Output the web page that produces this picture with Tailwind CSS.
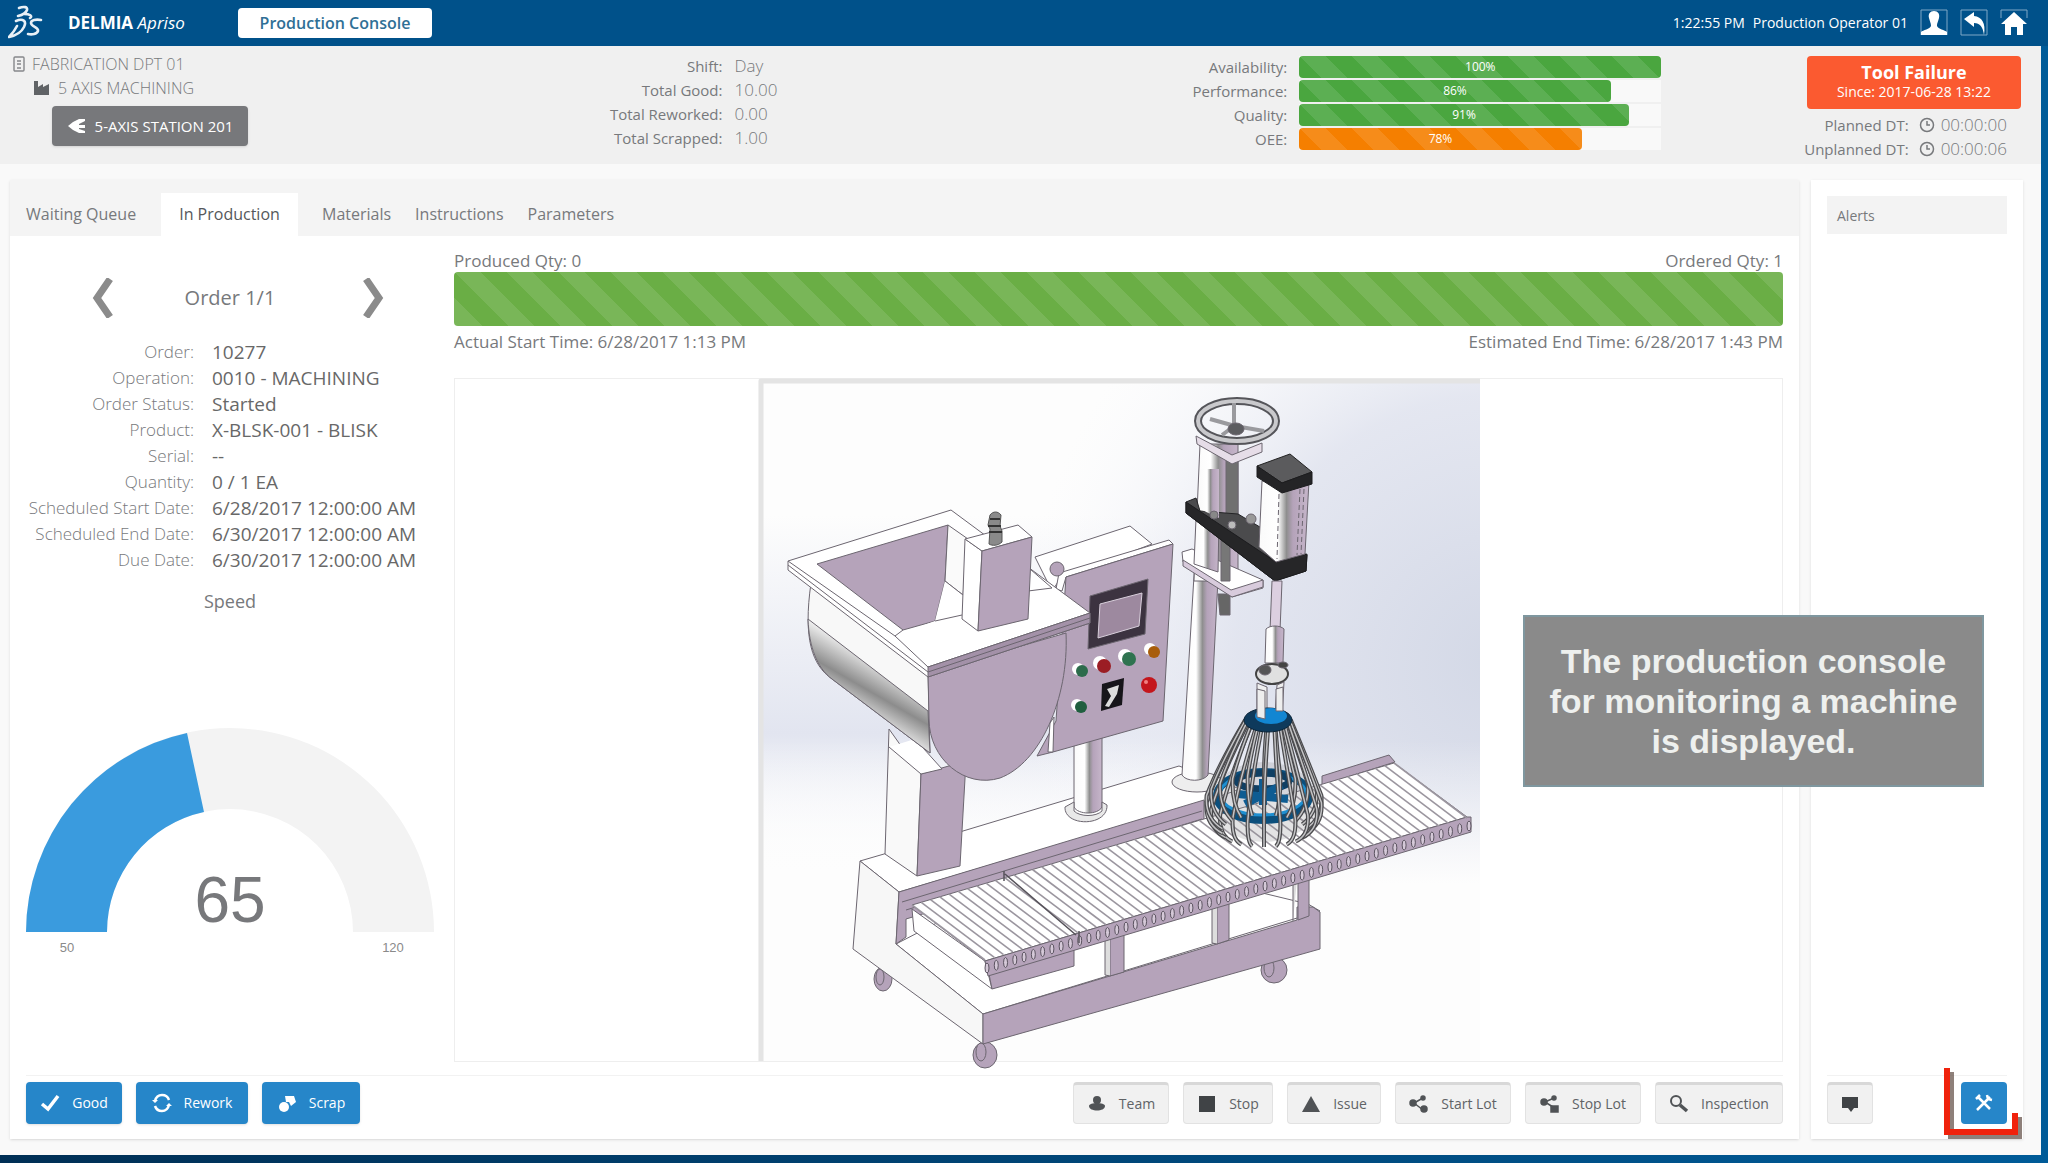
<!DOCTYPE html>
<html lang="en">
<head>
    <meta charset="UTF-8">
    <meta name="viewport" content="width=device-width, initial-scale=1.0">
    <title>DELMIA Apriso - Production Console</title>
    <script src="https://cdn.jsdelivr.net/npm/@tailwindcss/browser@4"></script>
    <style>
        body {
            font-family: 'Open Sans', 'Noto Sans', sans-serif;
        }
        /* Diagonal stripes for the progress bars */
        .striped {
            background-image: linear-gradient(45deg, rgba(255,255,255,.1) 25%, transparent 25%, transparent 50%, rgba(255,255,255,.1) 50%, rgba(255,255,255,.1) 75%, transparent 75%);
            background-size: 52px 52px;
        }
    </style>
</head>
<body class="min-h-screen flex flex-col bg-gradient-to-r from-[#002f55] to-[#005b98] text-[#77797c]">
    <div class="flex-1 flex flex-col mr-[7px] mb-2 bg-[#f9f9f9]">

        <!-- Top bar -->
        <header class="h-[46px] -mr-[7px] pl-2 pr-5 flex items-center bg-[#00518a] text-white">
            <svg class="w-9 h-9" viewBox="0 0 36 36" fill="none" stroke="#e8f0f6" stroke-width="2.6" stroke-linecap="round" stroke-linejoin="round" role="img" aria-label="3DS">
                <path d="M11 3C16 1 20 2 19 5C18 8 14 10 10 11M16 9C22 9 25 11 22 13" />
                <path d="M8 16C15 13 19 16 16 22C13 28 6 31 1 32C5 28 7 25 9 21" />
                <path d="M33 15C28 14 23 15 23 18C23 22 31 22 30 26C29 29 24 30 20 29" />
            </svg>
            <div class="ml-6 w-[170px] text-[17px] leading-6 whitespace-nowrap"><span class="font-bold">DELMIA</span> <span class="italic">Apriso</span></div>
            <button class="h-[30px] w-[194px] rounded bg-white text-[#2f7096] text-base font-semibold">Production Console</button>
            <div class="ml-auto flex items-center gap-2 text-sm leading-6">
                <span>1:22:55 PM</span>
                <span>Production Operator 01</span>
            </div>
            <div class="ml-3 flex items-center gap-3">
                <button aria-label="User">
                    <svg class="w-7 h-7" viewBox="0 0 28 28"><path d="M1 26V1H27V26" fill="none" stroke="#7fa8c6" stroke-width="1" /><path d="M14 2C18 2 20 5 19 9C18 13 17 14 17 17C18 20 25 21 27 23V26H1V23C3 21 10 20 11 17C11 14 10 13 9 9C8 5 10 2 14 2Z" fill="#fff" /></svg>
                </button>
                <button aria-label="Back">
                    <svg class="w-7 h-7" viewBox="0 0 28 28"><path d="M1 1H27V26H1Z" fill="none" stroke="#7fa8c6" stroke-width="1" /><path d="M4 10L14 3V7C22 8 26 14 24 26C23 18 20 14 14 14V18Z" fill="#fff" /></svg>
                </button>
                <button aria-label="Home">
                    <svg class="w-7 h-7" viewBox="0 0 28 28"><path d="M1 9V1H27V9" fill="none" stroke="#7fa8c6" stroke-width="1" /><path d="M14 3L27 15H23V26H17V18H11V26H5V15H1Z" fill="#fff" /></svg>
                </button>
            </div>
        </header>

        <!-- Status summary -->
        <section class="h-[118px] grid grid-cols-[28%_24%_33%_15%] bg-[#f0f0f0] text-[15px]">
            <div class="pl-3 pt-1.5 flex flex-col items-start">
                <div class="flex items-center gap-1.5 h-6 text-base font-light">
                    <svg class="w-3.5 h-4" viewBox="0 0 14 16" fill="none" stroke="#85878a" stroke-width="1.4"><rect x="2" y="1" width="10" height="14" rx="1" /><path d="M5 5H9M5 8H9M5 12H9" /></svg>
                    FABRICATION DPT 01
                </div>
                <div class="flex items-center gap-2 h-6 ml-[22px] text-base font-light">
                    <svg class="w-4 h-4" viewBox="0 0 16 16" fill="#606366"><path d="M0 1H4V7L9 4V7L15 4V15H0Z" /></svg>
                    5 AXIS MACHINING
                </div>
                <button class="mt-1.5 ml-10 h-10 w-[196px] rounded-sm bg-[#77787b] text-white text-[15px] flex items-center justify-center gap-2 shadow">
                    <svg class="w-5 h-5" viewBox="0 0 20 20" fill="#fff"><path d="M1 10L6 6L12 3L18 3V5L12 8V9H18V12H12V13L18 15V17H12L6 14Z" /></svg>
                    5-AXIS STATION 201
                </button>
            </div>
            <dl class="pt-2 grid grid-cols-[151px_1fr] auto-rows-[24px] gap-x-3 content-start leading-6 [&>dd]:text-[17px]">
                <dt class="text-right">Shift:</dt><dd class="font-light">Day</dd>
                <dt class="text-right">Total Good:</dt><dd class="font-light">10.00</dd>
                <dt class="text-right">Total Reworked:</dt><dd class="font-light">0.00</dd>
                <dt class="text-right">Total Scrapped:</dt><dd class="font-light">1.00</dd>
            </dl>
            <dl class="pt-2.5 grid grid-cols-[226px_362px] auto-rows-[24px] gap-x-3 content-start leading-[22px] [&>dd]:h-[22px] [&>dd]:bg-[#f9f9f9] [&>dd>div]:h-full [&>dd>div]:rounded-sm [&>dd>div]:text-center [&>dd>div]:text-xs [&>dd>div]:leading-[22px] [&>dd>div]:text-white">
                <dt class="text-right">Availability:</dt><dd><div class="striped bg-[#4aa63f]" style="width:100%">100%</div></dd>
                <dt class="text-right">Performance:</dt><dd><div class="striped bg-[#4aa63f]" style="width:86%">86%</div></dd>
                <dt class="text-right">Quality:</dt><dd><div class="striped bg-[#4aa63f]" style="width:91%">91%</div></dd>
                <dt class="text-right">OEE:</dt><dd><div class="striped bg-[#f57f00]" style="width:78%">78%</div></dd>
            </dl>
            <div class="pt-2.5 pr-5 flex flex-col items-end">
                <div class="w-[214px] h-[53px] rounded-sm bg-[#fb5a30] text-white text-center pt-1">
                    <div class="text-lg leading-6 font-bold">Tool Failure</div>
                    <div class="text-sm leading-4">Since: 2017-06-28 13:22</div>
                </div>
                <dl class="mt-1 mr-3.5 grid grid-cols-[auto_auto] auto-rows-[24px] gap-x-2.5 leading-6 text-right [&>dd]:text-[17px]">
                    <dt>Planned DT:</dt>
                    <dd class="flex items-center gap-1.5 font-light"><svg class="w-4 h-4" viewBox="0 0 16 16" fill="none" stroke="#77797c" stroke-width="1.5"><circle cx="8" cy="8" r="6.5" /><path d="M8 4V8H11" /></svg>00:00:00</dd>
                    <dt>Unplanned DT:</dt>
                    <dd class="flex items-center gap-1.5 font-light"><svg class="w-4 h-4" viewBox="0 0 16 16" fill="none" stroke="#77797c" stroke-width="1.5"><circle cx="8" cy="8" r="6.5" /><path d="M8 4V8H11" /></svg>00:00:06</dd>
                </dl>
            </div>
        </section>

        <main class="flex-1 flex gap-3 pt-4 pl-2.5 pr-[18px] pb-4">
            <section class="flex-1 flex flex-col bg-white shadow-sm">
                <!-- Tabs -->
                <nav class="h-[56px] flex items-end bg-[#f4f4f4] text-base [&>a]:h-[43px] [&>a]:leading-[43px]">
                    <a href="#" class="w-[151px] pl-4">Waiting Queue</a>
                    <a href="#" class="w-[137px] text-center bg-white text-[#55585b]">In Production</a>
                    <a href="#" class="ml-6">Materials</a>
                    <a href="#" class="ml-6">Instructions</a>
                    <a href="#" class="ml-6">Parameters</a>
                </nav>

                <div class="flex-1 flex px-4 gap-5">
                    <!-- Order details -->
                    <div class="w-[408px] flex flex-col">
                        <div class="mt-[42px] px-16 flex items-center justify-between">
                            <button aria-label="Previous order"><svg class="w-6 h-10" viewBox="0 0 24 40" fill="none" stroke="#8b8b8b" stroke-width="7"><path d="M20 1L7 20L20 39" /></svg></button>
                            <h2 class="pr-4 text-xl leading-6">Order 1/1</h2>
                            <button class="-mr-4" aria-label="Next order"><svg class="w-6 h-10" viewBox="0 0 24 40" fill="none" stroke="#8b8b8b" stroke-width="7"><path d="M4 1L17 20L4 39" /></svg></button>
                        </div>
                        <dl class="mt-[21px] grid grid-cols-[168px_1fr] auto-rows-[26px] gap-x-[18px] leading-[26px] whitespace-nowrap [&>dt]:text-right [&>dt]:text-[17px] [&>dt]:font-light [&>dd]:text-[19px] [&>dd]:text-[#686868]">
                            <dt>Order:</dt><dd>10277</dd>
                            <dt>Operation:</dt><dd>0010 - MACHINING</dd>
                            <dt>Order Status:</dt><dd>Started</dd>
                            <dt>Product:</dt><dd>X-BLSK-001 - BLISK</dd>
                            <dt>Serial:</dt><dd>--</dd>
                            <dt>Quantity:</dt><dd>0 / 1 EA</dd>
                            <dt>Scheduled Start Date:</dt><dd>6/28/2017 12:00:00 AM</dd>
                            <dt>Scheduled End Date:</dt><dd>6/30/2017 12:00:00 AM</dd>
                            <dt>Due Date:</dt><dd>6/30/2017 12:00:00 AM</dd>
                        </dl>
                        <h3 class="mt-4 text-center text-lg leading-6">Speed</h3>
                        <!-- Gauge -->
                        <svg class="mt-[115px] w-full" viewBox="0 0 408 232" font-family="Liberation Sans, Arial, sans-serif" text-anchor="middle">
                            <path d="M0 204A204 204 0 0 1 408 204H327A123 123 0 0 0 81 204Z" fill="#f3f3f3" />
                            <path d="M0 204A204 204 0 0 1 161 5L178 84A123 123 0 0 0 81 204Z" fill="#3a9bde" />
                            <text x="204" y="194" font-size="64" fill="#77787b">65</text>
                            <text x="41" y="224" font-size="13" fill="#8a8a8a">50</text>
                            <text x="367" y="224" font-size="13" fill="#8a8a8a">120</text>
                        </svg>
                    </div>

                    <!-- Progress and machine picture -->
                    <div class="flex-1 flex flex-col pb-3">
                        <div class="mt-3.5 flex justify-between text-[17px] leading-[22px]">
                            <span>Produced Qty: 0</span><span>Ordered Qty: 1</span>
                        </div>
                        <div class="striped h-[54px] rounded bg-[#6aae45]" role="progressbar" aria-label="Order progress"></div>
                        <div class="mt-1 flex justify-between text-[17px] leading-6">
                            <span>Actual Start Time: 6/28/2017 1:13 PM</span><span>Estimated End Time: 6/28/2017 1:43 PM</span>
                        </div>
                        <div class="mt-6 flex justify-center border border-[#eeeeee]">
                            <svg id="machine" class="w-[722px] overflow-visible" viewBox="758 380 722 682" stroke="#6c6670" stroke-width="1" stroke-linejoin="round" role="img" aria-label="Filling machine with roller conveyor">
                                <defs>
                                    <radialGradient id="sky" gradientUnits="userSpaceOnUse" cx="1500" cy="660" r="480">
                                        <stop offset="0" stop-color="#d3d8e6" />
                                        <stop offset=".55" stop-color="#e1e4ef" stop-opacity=".9" />
                                        <stop offset="1" stop-color="#f6f7fb" stop-opacity="0" />
                                    </radialGradient>
                                    <linearGradient id="haze" x1="0" y1="0" x2="0" y2="1">
                                        <stop offset=".2" stop-color="#e2e5f0" stop-opacity="0" />
                                        <stop offset=".52" stop-color="#e2e5f0" />
                                        <stop offset=".72" stop-color="#f4f5f9" stop-opacity="0" />
                                    </linearGradient>
                                    <linearGradient id="fade" x1="0" y1="0" x2="0" y2="1">
                                        <stop offset=".53" stop-color="#fdfdfd" stop-opacity="0" />
                                        <stop offset=".74" stop-color="#fdfdfd" />
                                    </linearGradient>
                                    <linearGradient id="tube" x1="0" x2="1">
                                        <stop offset="0" stop-color="#fafafa" />
                                        <stop offset=".38" stop-color="#ffffff" />
                                        <stop offset=".55" stop-color="#8e8e8e" />
                                        <stop offset=".68" stop-color="#b5a3ba" />
                                        <stop offset="1" stop-color="#c6b6ca" />
                                    </linearGradient>
                                    <linearGradient id="belly" gradientUnits="userSpaceOnUse" x1="880" y1="660" x2="850" y2="712">
                                        <stop offset="0" stop-color="#f6f6f6" />
                                        <stop offset=".55" stop-color="#8c8c8c" />
                                        <stop offset="1" stop-color="#ededed" />
                                    </linearGradient>
                                </defs>
                                <rect x="758" y="380" width="722" height="682" fill="#fdfdfd" stroke="none" />
                                <rect x="758" y="380" width="722" height="682" fill="url(#haze)" stroke="none" />
                                <rect x="758" y="380" width="722" height="682" fill="url(#sky)" stroke="none" />
                                <rect x="758" y="380" width="722" height="682" fill="url(#fade)" stroke="none" />
                                <path d="M761 1062V382H1480" fill="none" stroke="#e4e4e4" stroke-width="5" />

                                <!-- base frame -->
                                <g fill="#b5a3ba">
                                    <ellipse cx="883" cy="980" rx="9" ry="12" /><ellipse cx="880" cy="978" rx="4" ry="8" />
                                    <ellipse cx="985" cy="1056" rx="12" ry="13" /><ellipse cx="981" cy="1053" rx="5" ry="9" />
                                    <ellipse cx="1274" cy="971" rx="13" ry="13" /><ellipse cx="1269" cy="969" rx="5" ry="9" />
                                </g>
                                <path d="M860 862L963 832L1179 767L1240 790L1204 803L899 893Z" fill="#fff" />
                                <path d="M896 945L983 1015L1320 912L1308 905L1080 850Z" fill="#fff" />
                                <path d="M860 862L899 893L896 945L983 1015V1045L853 950Z" fill="#f7f7f7" />
                                <path d="M983 1015L1297 921V908H1313L1320 913V950L983 1045Z" fill="#b5a3ba" />
                                <path d="M899 893L1204 801L1204 830L906 920V938L896 945Z" fill="#b5a3ba" />
                                <path d="M902 903L1202 812M906 911L1202 820" fill="none" />
                                <path d="M1110 930H1124V973L1110 977ZM1217 900H1229V941L1217 945ZM1298 870H1309V917L1298 921Z" fill="#b5a3ba" />
                                <path d="M1110 930H1105V976L1110 977M1217 900H1212V944L1217 945M1298 870H1293V922" fill="#ddd" />

                                <!-- roller conveyor -->
                                <path d="M912 910L985 962L992 990L914 932Z" fill="#fff" />
                                <path d="M988 970L1074 945V967L992 990Z" fill="#b5a3ba" />
                                <path d="M1322 777L1389 756L1395 763L1322 786Z" fill="#b5a3ba" />
                                <path d="M912 906L1394 764L1467 818L985 962Z" fill="#fff" />
                                <path d="M985 962L1467 818H1471V833L988 977Z" fill="#b5a3ba" />
                                <g id="rollers" stroke="#9b969f"></g>
                                <path d="M1005 875L1076 936M1004 872V882M1079 932V944" fill="none" stroke="#56525a" stroke-width="1.5" />

                                <!-- left leg -->
                                <path d="M889 730L921 775L917 877L885 855Z" fill="#f9f9f9" />
                                <path d="M921 775L966 762L960 867L917 877Z" fill="#b5a3ba" />
                                <path d="M889 748L921 775L942 770L915 740" fill="#fff" />

                                <!-- control cabinet -->
                                <path d="M1074 725H1102V808C1098 816 1078 816 1074 808Z" fill="url(#tube)" />
                                <path d="M1065 808C1064 828 1108 828 1107 806L1102 803V812C1096 818 1080 818 1074 812V803Z" fill="#e9e9e9" />
                                <path d="M1035 558L1130 527L1152 545L1060 580L1052 592Z" fill="#fff" />
                                <path d="M1059 574L1169 541L1173 545L1066 578L1062 592L1056 590Z" fill="#fff" />
                                <path d="M1066 578L1173 545L1163 722L1053 753L1037 757L1056 722Z" fill="#b5a3ba" />
                                <path d="M1050 724L1054 718L1053 753L1048 753Z" fill="#fff" />
                                <circle cx="1057" cy="570" r="7" fill="#b5a3ba" />
                                <path d="M1090 597L1148 580L1145 635L1088 650Z" fill="#3c3340" />
                                <path d="M1100 605L1142 594L1139 627L1098 639Z" fill="#9d899f" stroke="#d9d0dc" />
                                <g stroke="none">
                                    <circle cx="1078" cy="670" r="6" fill="#fff" /><circle cx="1082" cy="672" r="6" fill="#2c6b4b" />
                                    <circle cx="1100" cy="664" r="7" fill="#fff" /><circle cx="1104" cy="667" r="7" fill="#9b1d24" />
                                    <circle cx="1125" cy="657" r="7" fill="#fff" /><circle cx="1129" cy="660" r="7" fill="#2f7350" />
                                    <circle cx="1150" cy="650" r="6" fill="#fff" /><circle cx="1154" cy="653" r="6" fill="#a85d0c" />
                                    <circle cx="1077" cy="706" r="6" fill="#fff" /><circle cx="1081" cy="708" r="6" fill="#205f3f" />
                                    <circle cx="1149" cy="686" r="8" fill="#c4161c" /><circle cx="1146" cy="683" r="2" fill="#f08080" />
                                    <path d="M1102 685L1124 679L1122 706L1101 712Z" fill="#17151a" />
                                    <path d="M1107 690L1119 686L1117 695L1109 708L1105 707L1111 697Z" fill="#dcdcdc" />
                                </g>

                                <!-- tank -->
                                <path d="M811 584L928 672L930 754L832 680C812 666 803 640 811 584Z" fill="#f8f8f8" />
                                <path d="M808 620L928 712L930 754L832 680C817 669 809 648 808 620Z" fill="url(#belly)" />
                                <path d="M928 674L1066 634C1069 700 1040 764 1000 779C965 790 929 760 929 720Z" fill="#b5a3ba" />
                                <path d="M788 562L951 511L1090 614V624L928 678L788 571Z" fill="#fff" />
                                <path d="M817 565L948 526L945 582L935 622L903 631Z" fill="#b5a3ba" />
                                <path d="M948 526L968 540L963 596L945 582Z" fill="#fafafa" />
                                <path d="M945 582L963 596L975 612L895 637L935 622Z" fill="#fff" stroke="none" />
                                <path d="M945 582L963 596M935 622L962 616M895 637L903 631M1028 592L1052 589M1030 570L1052 589" fill="none" />
                                <path d="M895 637L928 668L1090 614M788 562L895 637M788 566L928 673" fill="none" />
                                <path d="M928 668L1090 614V624L928 678Z" fill="#a391a8" />
                                <path d="M928 673L1090 619" fill="none" />
                                <path d="M965 540L982 552L978 632L962 620Z" fill="#fff" />
                                <path d="M965 540L1018 526L1032 538L982 552Z" fill="#fff" />
                                <path d="M982 552L1032 538L1028 620L978 632Z" fill="#b5a3ba" />
                                <path d="M989 545L990 530L988 526L990 516C993 512 998 512 1001 516L1000 527L1002 532V543C998 547 992 547 989 545Z" fill="#8a8a8a" stroke="#555" />
                                <path d="M988 527H1001M989 533H1002M990 520H1000" stroke="#333" stroke-width="2" />

                                <!-- mixer stand -->
                                <ellipse cx="1197" cy="783" rx="25" ry="10" fill="#eee" />
                                <path d="M1195 560H1219L1208 776C1203 783 1186 783 1182 776Z" fill="url(#tube)" />
                                <path d="M1200 445H1238V582H1194Z" fill="url(#tube)" />
                                <path d="M1226 460H1238V520H1226Z" fill="#707070" />
                                <path d="M1218 595H1230V616H1220Z" fill="#666" />
                                <path d="M1182 553L1192 550L1263 581V589L1232 598L1183 563Z" fill="#fff" />
                                <path d="M1183 561L1231 591L1263 581V588L1232 598L1183 567Z" fill="#d8cbdc" />
                                <path d="M1196 520H1219L1218 573L1194 565Z" fill="url(#tube)" />
                                <path d="M1221 540H1230V582H1221Z" fill="#777" />
                                <path d="M1196 437L1232 456L1262 444V453L1232 465L1197 445Z" fill="#e6dde8" />
                                <ellipse cx="1237" cy="422" rx="39" ry="20" fill="none" stroke="#55555a" stroke-width="8" />
                                <ellipse cx="1237" cy="422" rx="39" ry="20" fill="none" stroke="#c9c9cc" stroke-width="4" />
                                <path d="M1234 404V425M1210 420L1235 427L1264 432M1237 425L1222 436" fill="none" stroke="#9a9a9e" stroke-width="4" />
                                <ellipse cx="1236" cy="430" rx="8" ry="6" fill="#5c5c60" />
                                <path d="M1186 503L1196 499L1200 512L1238 515L1307 556L1306 572L1275 582L1186 514Z" fill="#4b4b4d" stroke="#242426" />
                                <path d="M1186 503L1276 563L1307 555L1306 572L1275 582L1186 514Z" fill="#262628" stroke="#1c1c1e" />
                                <path d="M1200 470H1219V519L1200 510Z" fill="url(#tube)" stroke="none" />
                                <circle cx="1214" cy="516" r="4" fill="#888" /><circle cx="1232" cy="526" r="4" fill="#bbb" /><circle cx="1251" cy="520" r="5" fill="#999" />
                                <path d="M1262 482L1309 482L1305 555L1276 563L1259 548Z" fill="url(#tube)" />
                                <path d="M1300 490L1297 556M1304 490L1301 555M1279 495L1277 560" stroke-dasharray="5 3" />
                                <path d="M1257 467L1290 455L1312 473L1282 484Z" fill="#5b5b5d" stroke="#222" />
                                <path d="M1257 467L1282 484L1312 473V485L1282 494L1257 478Z" fill="#242426" stroke="#1c1c1e" />

                                <!-- spindle -->
                                <path d="M1272 582H1282L1280 632H1270Z" fill="#dccfe0" />
                                <path d="M1266 630C1270 626 1280 626 1284 630L1283 664H1265Z" fill="url(#tube)" />
                                <ellipse cx="1272" cy="675" rx="16" ry="10" fill="#e0e0e0" stroke="#444" stroke-width="2" />
                                <ellipse cx="1265" cy="671" rx="6" ry="5" fill="#555" /><ellipse cx="1283" cy="666" rx="5" ry="3" fill="#444" />
                                <path d="M1257 722V684L1267 688V722ZM1275 716L1277 686L1284 683L1282 716Z" fill="#eee" />

                                <!-- basket -->
                                <ellipse cx="1264" cy="803" rx="54" ry="40" fill="#8f8f92" fill-opacity=".25" stroke="none" />
                                <ellipse cx="1263" cy="797" rx="46" ry="24" fill="none" stroke="#0c4f7c" stroke-width="8" />
                                <ellipse cx="1263" cy="795" rx="43" ry="21" fill="none" stroke="#1f8fd0" stroke-width="3" />
                                <ellipse cx="1263" cy="782" rx="26" ry="8" fill="none" stroke="#103f63" stroke-width="7" />
                                <path d="M1238 795L1288 800M1245 805L1282 786M1263 780V806" stroke="#0f5c92" stroke-width="8" />
                                <g id="wires" fill="none"></g>
                                <ellipse cx="1268" cy="721" rx="24" ry="12" fill="#0e3a5c" stroke="#0a2438" />
                                <ellipse cx="1271" cy="717" rx="16" ry="8" fill="#1286d2" stroke="none" />
                                <path d="M1257 718V690L1265 692V720ZM1276 712V690L1283 688V712Z" fill="#eee" />
                            </svg>
                        </div>
                    </div>
                </div>

                <!-- Action buttons -->
                <div class="mx-4 h-16 pt-[6px] flex items-start justify-between border-t border-[#f2f2f2] text-sm [&_button]:h-[42px] [&_button]:rounded-sm [&_button]:flex [&_button]:items-center [&_button]:justify-center [&_button]:gap-3 [&_svg]:w-5 [&_svg]:h-5">
                    <div class="flex gap-3.5 text-white [&>button]:bg-[#2686c9] [&>button]:shadow">
                        <button class="w-24"><svg viewBox="0 0 20 20" fill="none" stroke="#fff" stroke-width="3.5"><path d="M2 11L8 16L18 3" /></svg>Good</button>
                        <button class="w-28"><svg viewBox="0 0 20 20" fill="none" stroke="#fff" stroke-width="2.5"><path d="M3 8C4 4 7 2 10 2C13 2 16 4 17 7M17 12C16 16 13 18 10 18C7 18 4 16 3 13" /><path d="M0 7L3 10L6 7ZM14 13L17 10L20 13Z" fill="#fff" stroke="none" /></svg>Rework</button>
                        <button class="w-[98px]"><svg viewBox="0 0 20 20" fill="#fff"><path d="M8 3H17L19 9L14 13L12 9H9Z" /><circle cx="7" cy="14" r="5" /></svg>Scrap</button>
                    </div>
                    <div class="flex gap-3.5 text-[#606366] [&>button]:bg-[#f1f1f1] [&>button]:border [&>button]:border-[#e2e2e2] [&>button]:border-t-[3px] [&>button]:border-t-[#d8d8d8]">
                        <button class="w-24"><svg viewBox="0 0 20 20" fill="#505356"><circle cx="10" cy="6" r="4" /><path d="M2 12C2 8 18 8 18 12C18 18 2 18 2 12Z" /></svg>Team</button>
                        <button class="w-[90px]"><svg viewBox="0 0 20 20" fill="#404346"><path d="M2 2H18V18H2Z" /></svg>Stop</button>
                        <button class="w-[94px]"><svg viewBox="0 0 20 20" fill="#505356"><path d="M10 2L19 18H1Z" /></svg>Issue</button>
                        <button class="w-[116px]"><svg viewBox="0 0 20 20" fill="#505356" stroke="#505356" stroke-width="1.5"><path d="M5 9L14 4M5 9L14 16" /><circle cx="4" cy="9" r="3" /><circle cx="14" cy="4" r="2" /><circle cx="15" cy="15" r="3" /></svg>Start Lot</button>
                        <button class="w-[116px]"><svg viewBox="0 0 20 20" fill="#505356" stroke="#505356" stroke-width="1.5"><path d="M5 8L14 4M5 8L13 13" /><circle cx="4" cy="8" r="3" /><circle cx="14" cy="4" r="2" /><path d="M11 12H18V18H11Z" /></svg>Stop Lot</button>
                        <button class="w-32"><svg viewBox="0 0 20 20" fill="none" stroke="#505356" stroke-width="2"><circle cx="7" cy="7" r="5" /><path d="M11 11L18 17" stroke-width="3.5" /></svg>Inspection</button>
                    </div>
                </div>
            </section>

            <!-- Alerts -->
            <aside class="w-[212px] px-4 pt-4 flex flex-col bg-white shadow-sm">
                <h2 class="h-[38px] pl-2.5 bg-[#f3f3f3] text-sm leading-10">Alerts</h2>
                <div class="mt-auto h-16 pt-[6px] flex items-start justify-between border-t border-[#f2f2f2]">
                    <button class="w-[46px] h-[42px] flex items-center justify-center rounded-sm bg-[#f1f1f1] border border-[#e2e2e2] border-t-[3px] border-t-[#d8d8d8]" aria-label="Comments">
                        <svg class="w-5 h-5" viewBox="0 0 20 20" fill="#404346"><path d="M2 3H18V14H14L11 18L8 14H2Z" /></svg>
                    </button>
                    <div class="relative">
                        <button class="w-[46px] h-[42px] flex items-center justify-center rounded-sm bg-[#2686c9]" aria-label="Tools">
                            <svg class="w-5 h-5" viewBox="0 0 20 20" fill="none" stroke="#fff" stroke-width="2.5"><path d="M3 17L16 4M4 4L16 16M13 2L14 6L18 7M2 6L6 2" /></svg>
                        </button>
                        <!-- highlight bracket -->
                        <svg class="absolute -left-[18px] -top-[16px] w-[80px] h-[74px]" viewBox="0 0 80 74" fill="none" stroke-width="6">
                            <path d="M6 3V67H74V48" stroke="#5e4a42" stroke-opacity=".7" transform="translate(2 3)" />
                            <path d="M4 2V66H72V47" stroke="#f0220c" />
                        </svg>
                    </div>
                </div>
            </aside>
        </main>
    </div>

    <!-- Caption laid over the console -->
    <div class="absolute right-[64px] top-[615px] w-[461px] h-[172px] flex items-center justify-center border-2 border-[#7f979f] bg-[#8a8a8a] text-center font-['Liberation_Sans'] font-bold text-[34px] leading-10 text-[#eef0ee]">
        <p>The production console<br>for monitoring a machine<br>is displayed.</p>
    </div>

    <script>
        // Adds one SVG shape to a group
        function addShape(group, name, attrs) {
            const el = document.createElementNS('http://www.w3.org/2000/svg', name);
            for (const key in attrs) {
                el.setAttribute(key, attrs[key]);
            }
            group.appendChild(el);
        }

        // Conveyor rollers with their end caps
        const rollers = document.getElementById('rollers');
        const count = 52;
        for (let i = 0; i <= count; i++) {
            const x = 912 + 482 * i / count;
            const y = 906 - 142 * i / count;
            addShape(rollers, 'line', { x1: x, y1: y, x2: x + 73, y2: y + 55, 'stroke-width': 1.6 });
            addShape(rollers, 'ellipse', { cx: x + 75, cy: y + 63, rx: 2, ry: 5, fill: '#d5c9d8', stroke: '#5b5360' });
        }

        const wires = document.getElementById('wires');
        for (let i = 0; i < 22; i++) {
            const a = Math.PI * 2 * i / 22 - Math.PI / 2;
            const c = Math.cos(a), s = Math.sin(a);
            const d = `M${1268 + 23 * c} ${722 + 9 * s}Q${1264 + 46 * c} ${768 + 16 * s} ${1264 + 58 * c} ${800 + 24 * s}Q${1264 + 60 * c} ${822 + 22 * s} ${1264 + 42 * c} ${832 + 16 * s}`;
            addShape(wires, 'path', { d: d, stroke: '#4b4b4e', 'stroke-width': 4 });
            addShape(wires, 'path', { d: d, stroke: '#c4c4c6', 'stroke-width': 1.5 });
        }
    </script>
</body>
</html>
